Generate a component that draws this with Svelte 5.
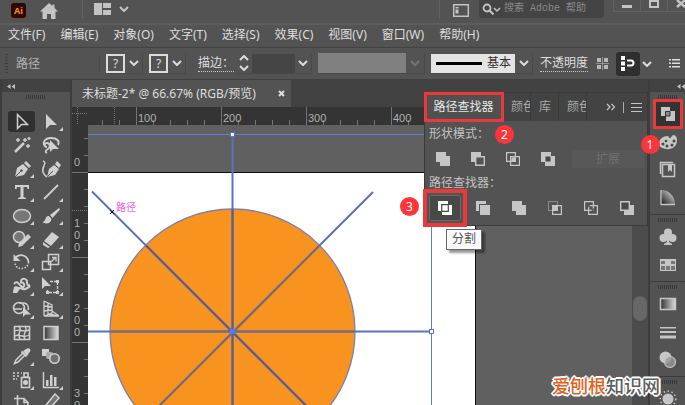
<script>
  const menus = ['文件(F)', '编辑(E)', '对象(O)', '文字(T)', '选择(S)', '效果(C)', '视图(V)', '窗口(W)', '帮助(H)'];

  // 20x20 icons, drawn with currentColor
  const tools = [
    { name: '选择工具', icon: '<path d="M5.500 2.500v14l4-4h6z" fill="none" stroke="currentColor" stroke-width="1.500"/>' },
    { name: '直接选择工具', more: true, icon: '<path d="M5 2v15l4-4h7z"/>' },
    { name: '魔棒工具', icon: '<path d="M3 17 12 8" stroke="currentColor" stroke-width="2.500"/><path d="M13 3v4M11 5h4M6 3v4M4 5h4M16 9v4M14 11h4M17 2v3M15.500 3.500h3" stroke="currentColor" stroke-width="1.400"/>' },
    { name: '套索工具', icon: '<path d="M5 12C0 8 4 3 10 3s9 3 7 7M6 12c-3 0-3-4 0-4s4 4 1 6-3 3-1 4" fill="none" stroke="currentColor" stroke-width="1.800"/><path d="M9 5v12l3-3h6z"/>' },
    { name: '钢笔工具', more: true, icon: '<path d="M3 18 5 9l6-4 5 5-4 6z"/><path d="m12 4 2-2 5 5-2 2z"/><path d="m3 18 6-6" stroke="#535353"/><circle cx="9.500" cy="11.500" r="1.200" fill="#535353"/>' },
    { name: '曲率工具', icon: '<path d="M6 18 8 10l5-4 5 4-4 6z"/><path d="m14 5 2-3 4 4-2 3z"/><path d="m6 18 6-6" stroke="#535353"/><path d="M2 2c5 2-2 6 0 11 1 3 3 4 4 5" fill="none" stroke="currentColor" stroke-width="1.500"/>' },
    { name: '文字工具', more: true, icon: '<path d="M3 3h14v4h-1.500L15 5h-3.500v10l2.500 1v1H6v-1l2.500-1V5H5l-.5 2H3z"/>' },
    { name: '直线段工具', more: true, icon: '<path d="M3 17 17 3" stroke="currentColor" stroke-width="1.800"/>' },
    { name: '椭圆工具', more: true, icon: '<ellipse cx="10" cy="10" rx="8.500" ry="6.500" fill="#777" stroke="currentColor" stroke-width="1.500"/>' },
    { name: '画笔工具', more: true, icon: '<path d="m18 2-9 7 2.500 3L19 3.500z"/><path d="M8 10c-3 0-3 2-4 4-.5 1-1.500 2-2.500 2C4 18.500 10 18 10.500 13z"/>' },
    { name: 'Shaper 工具', more: true, icon: '<circle cx="7" cy="8" r="5.500" fill="#777" stroke="currentColor" stroke-width="1.500"/><path d="m7 14 9-9 3 3-9 9-4 1z"/>' },
    { name: '橡皮擦工具', more: true, icon: '<path d="m3 12 8-9 7 5-8 9z"/><path d="m2 13 7 5-2 1-5-3z"/>' },
    { name: '旋转工具', more: true, icon: '<path d="M4 5c5-4 12-1 12.500 5" fill="none" stroke="currentColor" stroke-width="1.800"/><path d="M16.500 10c0 8-13 9-13.500 1" fill="none" stroke="currentColor" stroke-width="1.600" stroke-dasharray="1.500 1.500"/><path d="M1.500 2v7h7z"/>' },
    { name: '比例缩放工具', more: true, icon: '<path d="M7.500 2.500h10v10h-10zM1.500 9.500h8v8h-8z" fill="none" stroke="currentColor" stroke-width="1.500"/><path d="m10 10 4-4M11 5.500h4v4" fill="none" stroke="currentColor" stroke-width="1.300"/>' },
    { name: '宽度工具', more: true, icon: '<path d="M2 8c3-4 5 0 7 2s4 1 3-2-4 0-3-3 6-3 6 1c0 3 1 4 3 3M2 16c2-6 6-4 9-3s5-1 7-3" fill="none" stroke="currentColor" stroke-width="2"/><path d="M2 11c3-2 5 0 6 2l-3 4H1z"/>' },
    { name: '自由变换工具', more: true, icon: '<path d="M1 1v12l3-3h6z"/><path d="M9 5.500h7.500v11h-10v-3" fill="none" stroke="currentColor" stroke-width="1.300" stroke-dasharray="3 1"/><path d="M15 4h3v3h-3zM15 15h3v3h-3zM5 15h3v3H5z"/>' },
    { name: '形状生成器工具', more: true, icon: '<circle cx="7" cy="9" r="5.500" fill="none" stroke="currentColor" stroke-width="1.500"/><path d="M7 4h5a5 5 0 0 1 4 7M2 10h8" fill="none" stroke="currentColor" stroke-width="1.400"/><path d="M11 8v10l2.500-2.500H19z"/>' },
    { name: '透视网格工具', more: true, icon: '<path d="M3 2v15M3 2l8 4v8L3 17M3 7l8 1M3 12l8-1M7 4v11M3 17h15M8 15l9 2M11 12l7 5" fill="none" stroke="currentColor" stroke-width="1.300"/>' },
    { name: '网格工具', icon: '<path d="M2.500 3.500h15v13h-15z" fill="none" stroke="currentColor" stroke-width="1.600"/><path d="M3 8c5-3 6 2 14-1M3 13c5-3 8 3 14-1M7 3c4 5-3 7 1 13M13 3c4 5-4 8 0 13" fill="none" stroke="currentColor" stroke-width="1.400"/>' },
    { name: '渐变工具', icon: '<defs><linearGradient id="tool-grad"><stop stop-color="#333"/><stop offset="1" stop-color="#ddd"/></linearGradient></defs><path d="M3 3.500h14v13H3z" fill="url(#tool-grad)" stroke="currentColor" stroke-width="1.500"/>' },
    { name: '吸管工具', more: true, icon: '<path d="M11 5c1-1 2-1 3-2s3-1 4 0 0 3-1 4-1 2-2 3z"/><path d="m11 7-7 7-1.500 3.500L6 16l7-7" fill="none" stroke="currentColor" stroke-width="1.500"/><path d="m9.500 5.500 5 5" stroke="currentColor" stroke-width="2"/>' },
    { name: '混合工具', icon: '<path d="M1 3h7v7H1z"/><rect x="5" y="6" width="7" height="7" rx="2" fill="#aaa"/><circle cx="13.500" cy="12.500" r="4.700" fill="#707070" stroke="currentColor" stroke-width="1.600"/>' },
    { name: '符号喷枪工具', more: true, icon: '<path d="M1 3h2M5 3h2M9 3h1M1 6h2M5 6h2M1 9h2M4 9h1" stroke="currentColor" stroke-width="1.600"/><path d="M9.500 7.500h8v10h-8zM12 3h4v4h-4z" fill="none" stroke="currentColor" stroke-width="1.600"/><circle cx="13.500" cy="12.500" r="2.500"/>' },
    { name: '柱形图工具', more: true, icon: '<path d="M2.500 2v15.500H18" fill="none" stroke="currentColor" stroke-width="1.400"/><path d="M5 10h2.500v6H5zM9 5h2.500v11H9zM13 7h2.500v9H13z"/>' },
    { name: '画板工具', more: true, icon: '<path d="M5.500 2v14M2 5.500h10l4 4v8H5.500M12 5.500v4h4" fill="none" stroke="currentColor" stroke-width="1.600"/>' },
    { name: '切片工具', more: true, icon: '<path d="m14 1 4 4-9 10-5 3 1-6z" fill="#777" stroke="currentColor" stroke-width="1.500"/>' }
  ];

  // 14x14, two overlapping squares in every variation
  const shapeModes = [
    { name: '联集', icon: '<path d="M0 0h10v4h4v10H4v-4H0z"/>' },
    { name: '减去顶层', icon: '<path d="M0 0h10v4H4v6H0z"/><path d="M4.700 4.700h8.600v8.600H4.700z" fill="#535353" stroke="currentColor" stroke-width="1.400"/>' },
    { name: '交集', icon: '<path d="M.6.6h8.800v8.800H.6zM4.600 4.600h8.800v8.800H4.600z" fill="none" stroke="currentColor" stroke-width="1.200"/><path d="M5.500 5.500h3.500v3.500H5.500z"/>' },
    { name: '差集', icon: '<path d="M0 0h10v4h4v10H4v-4H0z"/><path d="M4.500 4.500h5v5h-5z" fill="#484848"/>' }
  ];

  const pathfinders = [
    { name: '分割', icon: '<path d="M0 0h10v4h4v10H4v-4H0z"/><path d="M3.700 3.700h6.600v6.600H3.700z" fill="none" stroke="#484848" stroke-width="1.200"/>' },
    { name: '修边', icon: '<path d="M0 0h10v3H3v7H0zM4 4h10v10H4z"/>' },
    { name: '合并', icon: '<path d="M0 0h10v4h4v10H4v-4H0z"/><path d="M10.500 0v3.500H14M0 10.500h3.500V14" fill="none" stroke="#535353"/>' },
    { name: '裁剪', icon: '<path d="M.5.5h9v9h-9z" fill="none" stroke="currentColor" stroke-dasharray="1 1"/><path d="M4.600 4.600h8.800v8.800H4.600z" fill="none" stroke="currentColor" stroke-width="1.200"/><path d="M4 4h6v6H4z"/>' },
    { name: '轮廓', icon: '<path d="M.6.6h8.800v8.800H.6zM4.600 4.600h8.800v8.800H4.600z" fill="none" stroke="currentColor" stroke-width="1.200"/><path d="m3.500 6 2.500-2.500M8 10l2.500-2.500" stroke="#535353" stroke-width="1.500"/>' },
    { name: '减去后方对象', icon: '<path d="M4 4h10v10H4z"/><path d="M.7.7h8.600v8.600H.7z" fill="#484848" stroke="currentColor" stroke-width="1.400"/>' }
  ];

  const dock = [
    [
      { name: '路径查找器', marked: true, icon: '<path d="M3 3h9v4h5v10H8v-5H3z"/><path d="M7.500 7.500h4.500v4.500H7.500z" fill="#8a8a8a" stroke="#333"/>' },
      { name: '颜色', icon: '<path d="M1 12c0-5 4-8 9-8 1 0 0 2 2 2s1-3 4-3c4 1 4 9 0 12-4 4-15 2-15-3z"/><g fill="#484848"><circle cx="5" cy="12" r="1.500"/><circle cx="9" cy="14" r="1.500"/><circle cx="14" cy="13" r="1.500"/><circle cx="16" cy="9" r="1.500"/><circle cx="8" cy="9" r="1.300"/></g>' },
      { name: '库', icon: '<path d="M2.500 14V2.500H15M4.500 4.500h12v12h-12z" fill="none" stroke="currentColor" stroke-width="1.500"/><path d="M10 5h4v7l-2-2-2 2z"/>' },
      { name: '颜色参考', icon: '<defs><linearGradient id="guide-grad" x1="0" y1="1" x2="1" y2="0"><stop stop-color="#111"/><stop offset="1" stop-color="#eee"/></linearGradient></defs><path d="M3 2c8 0 14 6 14 15H3z" fill="url(#guide-grad)"/><path d="M3 17V2M3 16.500h14" stroke="currentColor" stroke-width="1.300"/>' }
    ],
    [
      { name: '符号', icon: '<circle cx="10" cy="5.500" r="4"/><circle cx="5.500" cy="11" r="4"/><circle cx="14.500" cy="11" r="4"/><path d="M9 8h2v7l3 2v1H6v-1l3-2z"/>' },
      { name: '色板', icon: '<path d="M2 4h16v12H2z"/><path d="M3 6h4v3H3zM13 6h4v3h-4zM3 11h4v4H3zM8 11h4v4H8zM13 11h4v4h-4z" fill="#777"/>' }
    ],
    [
      { name: '渐变', icon: '<defs><linearGradient id="dock-grad"><stop stop-color="#333"/><stop offset="1" stop-color="#ddd"/></linearGradient></defs><path d="M2.500 4.500h15v11h-15z" fill="url(#dock-grad)" stroke="currentColor" stroke-width="1.500"/>' },
      { name: '描边', icon: '<path d="M2 5h16v1.500H2zM2 9h16v2H2zM2 13.500h16v3H2z"/>' },
      { name: '透明度', icon: '<circle cx="7.500" cy="7.500" r="6"/><circle cx="12" cy="12" r="5.500" fill="#999" fill-opacity=".8" stroke="currentColor" stroke-width="1.200"/>' }
    ],
    [
      { name: '外观', icon: '<circle cx="10" cy="10" r="5.500"/><circle cx="10" cy="10" r="7.800" fill="none" stroke="currentColor" stroke-width="1.500" stroke-dasharray="1.500 2.500"/>' }
    ]
  ];

  const step = 17;
  // ruler origins, relative to the canvas corner
  const hTicks = Array.from({ length: 34 }, (_, i) => ({ pos: (i - 2) * step - 3, major: (i - 2) % 5 === 3 }));
  const hLabels = [[48, '100'], [133, '200'], [218, '300'], [303, '400']];
  const vTicks = Array.from({ length: 20 }, (_, i) => ({ pos: i * step - 4, major: i % 5 === 3 }));
  const vLabels = [[41, '0'], [102, '100'], [187, '200'], [272, '30']];

  let activeTool = '选择工具';
  let activeTab = '路径查找器';
  let weight = '';
  let query = '';
</script>

<div class="app">
  <header class="titlebar">
    <span class="logo">Ai</span>
    <button class="plain home" aria-label="主页">
      <svg width="18" height="16" viewBox="0 0 18 16"><path d="M9 0 0 8.500h2.500V16H7v-5h4v5h4.500V8.500H18L14.500 5V1.500h-2V3z" /></svg>
    </button>
    <span class="rule"></span>
    <button class="plain layout" aria-label="排列文档">
      <svg width="17" height="12" viewBox="0 0 17 12"><path d="M0 0h8v12H0zM9 0h8v5H9zM9 7h8v5H9z" /></svg>
      <svg class="chev" width="10" height="6" viewBox="0 0 10 6"><path d="m1 1 4 4 4-4" /></svg>
    </button>
    <span class="rule push"></span>
    <button class="plain panel-toggle" aria-label="切换工作区">
      <svg width="16" height="13" viewBox="0 0 16 13"><path d="M.7.7h14.600v11.600H.7z" fill="none" stroke="currentColor" stroke-width="1.400" /><path d="M2.500 3h3v1.500h-3zM2.500 5.500h3v4h-3z" /></svg>
    </button>
    <label class="search">
      <svg width="19" height="12" viewBox="0 0 19 12"><g fill="none" stroke="currentColor"><circle cx="5" cy="5" r="3.500" stroke-width="1.800" /><path d="m7.500 7.500 4 4" stroke-width="2" /><path d="m12 5 3 3 3-3" stroke-width="1.500" /></g></svg>
      <input type="text" placeholder="搜索 Adobe 帮助" aria-label="搜索 Adobe 帮助" bind:value={query} />
    </label>
    <div class="window-buttons">
      <button aria-label="最小化"><svg width="10" height="12" viewBox="0 0 10 12"><path d="M0 5h10v3H0z" /></svg></button>
      <button aria-label="最大化"><svg width="10" height="12" viewBox="0 0 10 12"><path d="M1 1h8v6H1z" fill="none" stroke="currentColor" stroke-width="2" /></svg></button>
      <button aria-label="关闭"><svg width="10" height="12" viewBox="0 0 10 12"><path d="m1 0 8 7M9 0 1 7" stroke="currentColor" stroke-width="2.500" /></svg></button>
    </div>
  </header>

  <nav class="menubar">
    {#each menus as menu}
      <button class="plain">{menu}</button>
    {/each}
  </nav>

  <section class="control">
    <span class="dots"></span>
    <span class="context">路径</span>
    {#each ['填色', '描边颜色'] as label}
      <button class="field swatch" aria-label={label}>
        <span class="unknown">?</span>
        <svg class="chev" width="10" height="6" viewBox="0 0 10 6"><path d="m1 1 4 4 4-4" /></svg>
      </button>
    {/each}
    <label class="dotted stroke-label" for="weight">描边：</label>
    <div class="field weight">
      <button class="plain stepper" aria-label="调整描边粗细">
        <svg class="chev" width="10" height="16" viewBox="0 0 10 16"><path d="m1 5 4-4 4 4M1 11l4 4 4-4" /></svg>
      </button>
      <input id="weight" type="text" bind:value={weight} />
      <button class="plain arrow" aria-label="描边粗细选项">
        <svg class="chev" width="10" height="6" viewBox="0 0 10 6"><path d="m1 1 4 4 4-4" /></svg>
      </button>
    </div>
    <button class="field profile" aria-label="变量宽度配置文件" disabled>
      <span class="blank"></span>
      <svg class="chev" width="10" height="6" viewBox="0 0 10 6"><path d="m1 1 4 4 4-4" /></svg>
    </button>
    <button class="field brush">
      <span class="brush-name"><i></i>基本</span>
      <svg class="chev" width="10" height="6" viewBox="0 0 10 6"><path d="m1 1 4 4 4-4" /></svg>
    </button>
    <button class="plain dotted">不透明度</button>
    <button class="plain recolor" aria-label="对齐">
      <svg width="13" height="13" viewBox="0 0 13 13"><path d="M1 1h4v4H1zM8 1h4v4H8zM1 8h4v4H1zM8 8h4v4H8z" /><path d="M6.500 0v13M0 6.500h13" stroke="currentColor" stroke-width=".6" /></svg>
    </button>
    <button class="plain snap" aria-label="对齐到像素">
      <svg width="15" height="15" viewBox="0 0 15 15"><path d="M0 0h4v4H0zM0 5.500h4v4H0zM0 11h4v4H0z" /><path d="M6 4.500h4a2.500 2.500 0 0 1 0 5H6" fill="none" stroke="currentColor" stroke-width="2" /></svg>
    </button>
    <button class="plain snap-more" aria-label="对齐选项">
      <svg class="chev" width="10" height="6" viewBox="0 0 10 6"><path d="m1 1 4 4 4-4" /></svg>
    </button>
    <button class="plain push" aria-label="面板菜单">
      <svg width="11" height="9" viewBox="0 0 11 9"><path d="M0 0h2v1.500H0zM3 0h8v1.500H3zM0 3.500h2V5H0zM3 3.500h8V5H3zM0 7h2v1.500H0zM3 7h8v1.500H3z" /></svg>
    </button>
  </section>

  <main class="workspace">
    <aside class="toolbar">
      <div class="collapse">
        <svg width="8" height="5" viewBox="0 0 8 5"><path d="M3.500 0v5L0 2.500zM8 0v5L4.500 2.500z" /></svg>
      </div>
      <span class="grip"></span>
      <div class="tools">
        {#each tools as tool}
          <button class="tool" class:active={activeTool === tool.name} class:more={tool.more} aria-label={tool.name} on:click={() => (activeTool = tool.name)}>
            <svg width="20" height="20" viewBox="0 0 20 20">{@html tool.icon}</svg>
          </button>
        {/each}
      </div>
    </aside>

    <section class="document">
      <div class="tabs">
        <div class="doc-tab">
          <span>未标题-2* @ 66.67% (RGB/预览)</span>
          <button class="plain" aria-label="关闭文档">
            <svg width="7" height="7" viewBox="0 0 7 7"><path d="m1 1 5 5M6 1 1 6" stroke="currentColor" stroke-width="2" /></svg>
          </button>
        </div>
      </div>

      <div class="stage">
        <svg class="ruler corner"><path d="M5.500 0v18M0 6.500h16" stroke="#777" stroke-dasharray="1 1" /></svg>
        <svg class="ruler">
          {#each hTicks as tick}
            <line x1={tick.pos + 0.5} x2={tick.pos + 0.5} y1={tick.major ? 0 : 13} y2="18" />
          {/each}
          <line x1="26.5" x2="26.5" y1="0" y2="18" stroke-dasharray="1 1" />
          {#each hLabels as [x, text]}
            <text x={x + 2} y="15">{text}</text>
          {/each}
        </svg>
        <span class="ruler"></span>
        <svg class="ruler">
          {#each vTicks as tick}
            <line x1={tick.major ? 0 : 12} x2="16" y1={tick.pos + 0.5} y2={tick.pos + 0.5} />
          {/each}
          <line x1="0" x2="16" y1="85.5" y2="85.5" stroke-dasharray="1 1" />
          {#each vLabels as [y, text]}
            {#each text as digit, i}
              <text x="2" y={y + i * 12}>{digit}</text>
            {/each}
          {/each}
        </svg>

        <svg class="canvas">
          <rect x="-20" y="47.5" width="407.5" height="900" fill="#fff" stroke="#111" />
          <circle cx="144.5" cy="206.5" r="122.500" fill="#f7931e" stroke="#7d7fae" stroke-width="1.300" />
          <g stroke="#5a72bd" stroke-width="2">
            <path d="M0 206.500h343M144.500 9v400M4 66.500l280 280M285 67 4 348" />
          </g>
          <g stroke="#796a78" stroke-width="2">
            <path d="M22.500 206.500h244M231 121 58 294" />
          </g>
          <g stroke="#5c5c8c" stroke-width="2">
            <path d="M144.500 84.500v245M58 120.500l173 173" />
          </g>
          <path d="M0 9.500h343.500V400" fill="none" stroke="#5c7fdc" />
          <g fill="#fff" stroke="#4f74e0">
            <rect x="142.5" y="7.500" width="4" height="4" />
            <rect x="341.5" y="204.500" width="4" height="4" />
          </g>
          <rect x="142" y="204" width="5" height="5" fill="#4f7cf5" />
          <path d="m22 85 4 4M26 85l-4 4" stroke="#111" />
          <text class="smart" x="28" y="86">路径</text>
        </svg>

        <div class="scrollbar"><span></span></div>
      </div>

      <section class="pathfinder">
        <div class="panel-tabs">
          <button class="panel-tab wide" class:active={activeTab === '路径查找器'} on:click={() => (activeTab = '路径查找器')}>路径查找器</button>
          <button class="panel-tab">颜色</button>
          <button class="panel-tab">库</button>
          <button class="panel-tab">颜色</button>
          <div class="panel-actions">
            <svg width="10" height="8" viewBox="0 0 10 8"><path d="m1 1 3 3-3 3M5.500 1l3 3-3 3" fill="none" stroke="currentColor" stroke-width="1.300" /></svg>
            <span></span>
            <svg width="11" height="9" viewBox="0 0 11 9"><path d="M0 0h11v1H0zM0 4h11v1H0zM0 8h11v1H0z" /></svg>
          </div>
        </div>
        <div class="panel-body">
          <h2>形状模式：<b class="badge two">2</b></h2>
          <div class="ops modes">
            {#each shapeModes as op}
              <button class="op" aria-label={op.name}><svg width="14" height="14" viewBox="0 0 14 14">{@html op.icon}</svg></button>
            {/each}
            <button class="expand" disabled>扩展</button>
          </div>
          <h2>路径查找器：</h2>
          <div class="ops">
            {#each pathfinders as op, i}
              <button class="op" class:hovered={i === 0} aria-label={op.name}>
                <svg width="14" height="14" viewBox="0 0 14 14">{@html op.icon}</svg>
                {#if i === 0}
                  <b class="badge three">3</b>
                  <span class="tip">{op.name}</span>
                {/if}
              </button>
            {/each}
          </div>
        </div>
      </section>
    </section>

    <aside class="dock">
      <div class="collapse right">
        <svg width="8" height="5" viewBox="0 0 8 5"><path d="M3.500 0v5L0 2.500zM8 0v5L4.500 2.500z" /></svg>
      </div>
      {#each dock as group}
        <div class="dock-group">
          <span class="grip"></span>
          {#each group as item}
            <button class="dock-item" class:marked={item.marked} aria-label={item.name}>
              <svg width="20" height="20" viewBox="0 0 20 20">{@html item.icon}</svg>
              {#if item.marked}<b class="badge one">1</b>{/if}
            </button>
          {/each}
        </div>
      {/each}
    </aside>
  </main>

  <div class="watermark"><span>爱刨根</span>知识网</div>
</div>

<style>
  :global(body) {
    margin: 0;
    background: #535353;
  }

  .app {
    position: relative;
    display: flex;
    flex-direction: column;
    height: 100vh;
    overflow: hidden;
    background: #535353;
    color: #dedede;
    font: 12px/16px "Noto Sans", "Noto Sans CJK SC", sans-serif;
  }

  .app * {
    box-sizing: border-box;
  }

  button,
  input {
    margin: 0;
    padding: 0;
    border: none;
    background: none;
    color: inherit;
    font: inherit;
  }

  button {
    display: flex;
    align-items: center;
    white-space: nowrap;
  }

  svg {
    display: block;
    flex: none;
    fill: currentColor;
  }

  .chev {
    fill: none;
    stroke: currentColor;
    stroke-width: 2;
  }

  .push {
    margin-left: auto;
  }

  /* title bar */
  .titlebar {
    display: flex;
    flex: none;
    align-items: flex-start;
    height: 25px;
    padding-left: 11px;
    border-bottom: 2px solid #5e5e5e;
    color: #c4c4c4;
  }

  .logo {
    width: 15px;
    height: 15px;
    margin-top: 3px;
    border-radius: 3px;
    background: #310800;
    color: #f28a1c;
    font-size: 9px;
    font-weight: bold;
    line-height: 15px;
    text-align: center;
  }

  .home {
    margin: 3px 24px 0 14px;
  }

  .rule {
    width: 1px;
    height: 19px;
    background: #616161;
  }

  .rule.push {
    margin-left: auto;
  }

  .layout {
    gap: 8px;
    margin: 3px 0 0 11px;
  }

  .panel-toggle {
    margin: 4px 10px 0 13px;
  }

  .search {
    display: flex;
    align-items: center;
    gap: 3px;
    width: 125px;
    height: 18px;
    margin-right: 9px;
    padding-left: 3px;
    border-radius: 0 0 3px 3px;
    background: #444;
  }

  .search input {
    width: 96px;
    height: 14px;
    font: 10px/14px "Liberation Mono", "Noto Sans CJK SC", monospace;
  }

  .search input::placeholder {
    color: #8a8a8a;
  }

  .window-buttons {
    display: flex;
    width: 72px;
    height: 12px;
    overflow: hidden;
  }

  .window-buttons button {
    flex: none;
    justify-content: center;
    width: 27px;
    border: solid #616161;
    border-width: 0 0 1px 1px;
  }

  /* menu bar */
  .menubar {
    display: flex;
    flex: none;
    gap: 15px;
    height: 23px;
    padding: 0 8px;
    border-bottom: 1px solid #424242;
  }

  .menubar button {
    padding-bottom: 3px;
  }

  /* control bar */
  .control {
    display: flex;
    flex: none;
    align-items: center;
    height: 32px;
    padding: 0 5px;
    border-bottom: 1px solid #404040;
  }

  .dots {
    width: 3px;
    height: 20px;
    background: repeating-linear-gradient(#3e3e3e 0 1px, transparent 1px 3px);
  }

  .context {
    width: 84px;
    margin: 0 6px 0 8px;
    border-right: 1px solid #4a4a4a;
    color: #b4b4b4;
  }

  .field {
    flex: none;
    height: 20px;
    border: solid #494949;
    border-width: 0 1px 1px 0;
  }

  .swatch {
    gap: 4px;
    width: 37px;
    margin-right: 6px;
  }

  .unknown {
    width: 19px;
    height: 19px;
    border: 2px solid #dcdcdc;
    line-height: 15px;
  }

  .dotted {
    flex: none;
    border-bottom: 1px dotted #c8c8c8;
  }

  .stroke-label {
    margin: 0 2px 0 6px;
    white-space: nowrap;
  }

  .weight {
    display: flex;
    width: 76px;
  }

  .stepper,
  .arrow {
    justify-content: center;
    width: 16px;
  }

  .weight input {
    width: 43px;
    background: #454545;
  }

  .profile {
    gap: 4px;
    width: 107px;
    margin-left: 6px;
    color: #757575;
  }

  .blank {
    width: 88px;
    height: 20px;
    background: #808080;
  }

  .brush {
    gap: 4px;
    width: 102px;
    margin: 0 7px 0 6px;
  }

  .brush-name {
    display: flex;
    align-items: center;
    gap: 5px;
    width: 84px;
    height: 19px;
    padding-left: 5px;
    background: #e4e4e4;
    color: #333;
  }

  .brush-name i {
    width: 46px;
    height: 3px;
    background: #000;
  }

  .recolor {
    margin: 0 7px 0 8px;
    color: #b8b8b8;
  }

  .snap {
    justify-content: center;
    width: 24px;
    height: 24px;
    border-radius: 3px;
    background: #2f2f2f;
    color: #fff;
  }

  .snap-more {
    margin-left: 2px;
  }

  /* workspace */
  .workspace {
    display: flex;
    flex: 1;
    min-height: 0;
  }

  .collapse {
    display: flex;
    flex: none;
    align-items: center;
    height: 12px;
    padding-left: 5px;
    background: #424242;
    color: #c0c0c0;
  }

  .collapse.right {
    justify-content: flex-end;
    overflow: hidden;
  }

  .grip {
    display: block;
    flex: none;
    width: 19px;
    height: 4px;
    background: repeating-linear-gradient(90deg, #383838 0 1px, transparent 1px 2px);
  }

  .toolbar {
    display: flex;
    flex: none;
    flex-direction: column;
    width: 72px;
    border: solid #3d3d3d;
    border-width: 0 2px;
  }

  .toolbar .grip {
    margin: 3px 0 11px 24px;
  }

  .tools {
    display: grid;
    flex: 1;
    grid-template-columns: 29px 29px;
    grid-auto-rows: 1fr;
    min-height: 0;
    margin-bottom: -10px;
    padding-left: 5px;
    color: #d0d0d0;
  }

  .tool {
    position: relative;
    justify-content: center;
    min-height: 0;
    margin: 1px;
    border-radius: 3px;
  }

  .tool.active {
    background: #303030;
  }

  .tool.more::after {
    position: absolute;
    right: 1px;
    bottom: 1px;
    border: 2px solid;
    border-color: transparent currentColor currentColor transparent;
    content: "";
  }

  .document {
    position: relative;
    display: flex;
    flex: 1;
    flex-direction: column;
    min-width: 0;
    border-right: 2px solid #3d3d3d;
  }

  .tabs {
    display: flex;
    flex: none;
    height: 27px;
    background: #424242;
  }

  .doc-tab {
    display: flex;
    align-items: center;
    justify-content: space-between;
    width: 219px;
    padding: 0 6px 0 10px;
    background: #535353;
    white-space: nowrap;
  }

  .stage {
    display: grid;
    flex: 1;
    grid-template: 18px minmax(0, 1fr) / 16px minmax(0, 1fr) 16px;
    min-height: 0;
  }

  .ruler {
    width: 100%;
    height: 100%;
    background: #343434;
    color: #b0b0b0;
    font: 11px "Liberation Sans", sans-serif;
  }

  .ruler line {
    stroke: #747474;
  }

  .canvas {
    width: 100%;
    height: 100%;
    background: #606060;
  }

  .smart {
    fill: #ee5cf0;
    font-size: 10px;
  }

  .scrollbar {
    padding: 171px 1px 0;
    background: #4c4c4c;
  }

  .scrollbar span {
    display: block;
    height: 25px;
    border-radius: 7px;
    background: #676767;
  }

  /* pathfinder panel */
  .pathfinder {
    position: absolute;
    top: 12px;
    right: 0;
    width: 224px;
    border: 1px solid #3b3b3b;
    background: #535353;
  }

  .panel-tabs {
    display: flex;
    height: 28px;
    background: #434343;
    color: #a8a8a8;
  }

  .panel-tab {
    width: 28px;
    padding-left: 8px;
    border-right: 1px solid #393939;
    overflow: hidden;
  }

  .panel-tab.wide {
    justify-content: center;
    width: 78px;
    padding: 0;
    outline: 3px solid #e83a3d;
    outline-offset: -2px;
    color: #e6e6e6;
    z-index: 1;
  }

  .panel-tab.active {
    background: #505050;
  }

  .panel-actions {
    display: flex;
    align-items: center;
    gap: 7px;
    margin-left: auto;
    padding-right: 5px;
    color: #c4c4c4;
  }

  .panel-actions span {
    width: 1px;
    height: 11px;
    background: #aaa;
  }

  .panel-body {
    padding: 4px 3px 2px 4px;
  }

  h2 {
    position: relative;
    margin: 0;
    color: #c2c2c2;
    font-size: 12px;
    font-weight: normal;
    line-height: 18px;
  }

  .ops {
    display: flex;
    align-items: center;
    gap: 8px;
    height: 31px;
    color: #c6c6c6;
  }

  .op {
    position: relative;
    flex: none;
    justify-content: center;
    width: 28px;
    height: 26px;
  }

  .modes {
    gap: 7px;
  }

  .expand {
    justify-content: center;
    width: 72px;
    height: 18px;
    margin-left: auto;
    background: #585858;
    color: #6f6f6f;
  }

  .hovered {
    width: 32px;
    border: 1px solid #6b6b6b;
    border-radius: 3px;
    background: #484848;
    color: #fff;
  }

  /* callout frame round the hovered button */
  .hovered::after {
    position: absolute;
    inset: -7px;
    border: 4px solid #e83a3d;
    content: "";
  }

  .badge {
    position: absolute;
    z-index: 1;
    width: 19px;
    height: 19px;
    border-radius: 50%;
    background: #fb3539;
    color: #fff;
    font-size: 12px;
    font-weight: normal;
    line-height: 19px;
    text-align: center;
  }

  .badge.one {
    top: 35px;
    left: -13px;
  }

  .badge.two {
    top: 0;
    left: 66px;
  }

  .badge.three {
    top: 1px;
    right: 56px;
  }

  .badge.three {
    right: auto;
    left: -30px;
  }

  .tip {
    position: absolute;
    z-index: 2;
    top: 33px;
    left: 16px;
    padding: 1px 5px 2px;
    border: 1px solid #666;
    background: #fafafa;
    box-shadow: 3px 3px 2px rgba(0, 0, 0, 0.4);
    color: #555;
  }

  /* icon dock */
  .dock {
    flex: none;
    width: 35px;
    color: #c6c6c6;
  }

  .dock-group {
    display: flex;
    flex-direction: column;
    align-items: center;
    padding: 3px 0 2px;
    border-bottom: 1px solid #3a3a3a;
  }

  .dock-group .grip {
    margin-bottom: 1px;
  }

  .dock-item {
    position: relative;
    justify-content: center;
    width: 28px;
    height: 28px;
  }

  .dock-item.marked {
    z-index: 1;
    outline: 3px solid #e83a3d;
    outline-offset: -2px;
    background: #333;
  }

  /* site mark */
  .watermark {
    position: absolute;
    right: 25px;
    bottom: 7px;
    color: #5e5e5e;
    font-size: 18px;
    font-weight: 500;
    line-height: 24px;
    text-shadow: -2px 0 #fff, 2px 0 #fff, 0 -2px #fff, 0 2px #fff, -1px -1px #fff, 1px -1px #fff, -1px 1px #fff, 1px 1px #fff;
  }

  .watermark span {
    color: #e5601c;
  }
</style>
